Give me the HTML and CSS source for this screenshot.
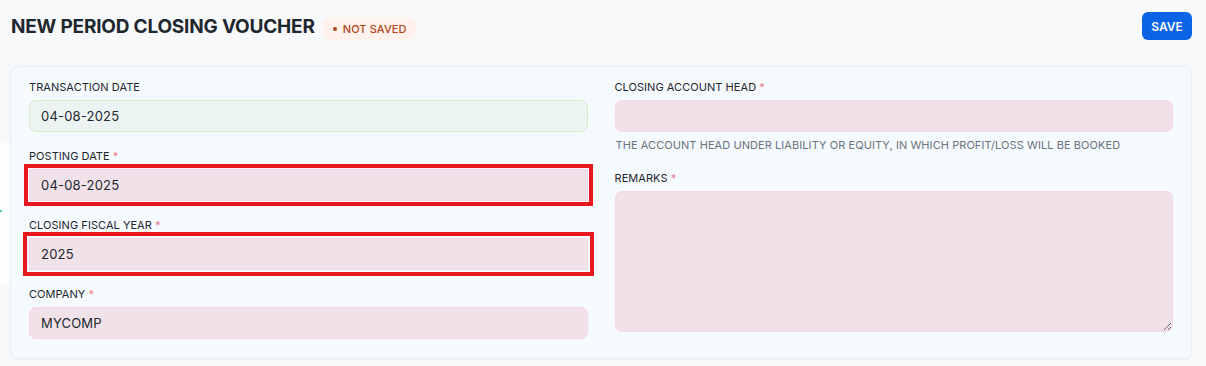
FILE: index.html
```html
<!DOCTYPE html>
<html>
<head>
<meta charset="utf-8">
<link rel="stylesheet" href="styles.css">
</head>
<body>
<div class="side-layer"><span class="side-dot"></span></div>
<header class="page-head">
  <div class="title-wrap">
    <h1 class="title">NEW PERIOD CLOSING VOUCHER</h1>
    <span class="badge"><span class="badge-dot"></span>NOT SAVED</span>
  </div>
  <button class="btn-save">SAVE</button>
</header>
<main class="card">
  <div class="col">
    <div class="field">
      <label class="label">TRANSACTION DATE</label>
      <div class="input input-ok">04-08-2025</div>
    </div>
    <div class="field">
      <label class="label">POSTING DATE <span class="req">*</span></label>
      <div class="input input-req mark-a">04-08-2025</div>
    </div>
    <div class="field">
      <label class="label">CLOSING FISCAL YEAR <span class="req">*</span></label>
      <div class="input input-req mark-b">2025</div>
    </div>
    <div class="field">
      <label class="label">COMPANY <span class="req">*</span></label>
      <div class="input input-req">MYCOMP</div>
    </div>
  </div>
  <div class="col">
    <div class="field">
      <label class="label">CLOSING ACCOUNT HEAD <span class="req">*</span></label>
      <div class="input input-req"></div>
      <p class="help">THE ACCOUNT HEAD UNDER LIABILITY OR EQUITY, IN WHICH PROFIT/LOSS WILL BE BOOKED</p>
    </div>
    <div class="field">
      <label class="label">REMARKS <span class="req">*</span></label>
      <textarea class="textarea input-req"></textarea>
    </div>
  </div>
</main>
</body>
</html>
```

FILE: styles.css
```css
* { box-sizing: border-box; }
html, body {
  margin: 0;
  padding: 0;
  background: #f8f9fa;
  font-family: Inter, "Noto Sans", sans-serif;
  color: #1f272e;
  width: 1206px;
  height: 366px;
  overflow: hidden;
}
.side-layer {
  position: absolute;
  left: 0;
  top: 142px;
  width: 26px;
  height: 141px;
  background: #fcfdfe;
}
.side-dot {
  position: absolute;
  left: 0;
  top: 68px;
  width: 2px;
  height: 2px;
  background: #1fb98a;
  border-radius: 1px;
}
.page-head {
  position: relative;
  display: flex;
  align-items: center;
  justify-content: space-between;
  padding: 12px 14px 0 11px;
}
.title-wrap {
  display: flex;
  align-items: center;
  gap: 8px;
  margin-top: 1px;
}
.title {
  margin: 0;
  font-size: 19px;
  font-weight: 700;
  line-height: 22px;
  letter-spacing: -0.2px;
  color: #1f272e;
}
.badge {
  display: inline-flex;
  align-items: center;
  height: 23px;
  padding: 0 9px 0 10px;
  margin-top: 4px;
  border-radius: 8px;
  background: #fff2ec;
  color: #b2441a;
  font-size: 11px;
  font-weight: 500;
  letter-spacing: 0.1px;
}
.badge-dot {
  width: 4px;
  height: 4px;
  border-radius: 50%;
  background: #b2441a;
  margin-right: 6px;
}
.btn-save {
  width: 50px;
  height: 28px;
  border: none;
  border-radius: 6px;
  background: #0b64e6;
  color: #fff;
  font-family: Inter, "Noto Sans", sans-serif;
  font-size: 12px;
  font-weight: 600;
  padding: 0;
}
.card {
  position: relative;
  margin: 26px 14px 0 10px;
  padding: 13px 18px 19px 18px;
  background: #f5faff;
  border: 1px solid #eceff1;
  border-radius: 8px;
  box-shadow: 0 1px 2px rgba(0,0,0,0.04);
  display: grid;
  grid-template-columns: 1fr 1fr;
  column-gap: 27px;
}
.field { margin-bottom: 17px; }
.col .field:last-child { margin-bottom: 0; }
.label {
  display: block;
  font-size: 11px;
  line-height: 14px;
  margin-bottom: 6px;
  color: #1f272e;
  letter-spacing: 0.05px;
}
.req { color: #ea7a87; }
.input {
  height: 32px;
  border-radius: 7px;
  padding: 0 11px;
  display: flex;
  align-items: center;
  font-size: 13px;
  color: #1f272e;
  letter-spacing: 0.2px;
}
.input-ok {
  background: #ebf3f3;
  border: 1px solid #d7eac8;
}
.input-req {
  background: #f1e2e9;
  border: 1px solid #f7d6e4;
}
.mark-a {
  border-radius: 0;
  outline: 4px solid #e8161f;
  outline-offset: 1px;
}
.mark-b {
  border-radius: 0;
  outline: 4px solid #e8161f;
  outline-offset: 2px;
}
.help {
  margin: 6px 0 0 1px;
  font-size: 11px;
  line-height: 14px;
  color: #6a737c;
  letter-spacing: 0.07px;
}
.field:has(.help) { margin-bottom: 19px; }
.textarea {
  display: block;
  width: 100%;
  height: 141px;
  border-radius: 7px;
  resize: vertical;
  font-family: Inter, sans-serif;
  outline: none;
}
```
